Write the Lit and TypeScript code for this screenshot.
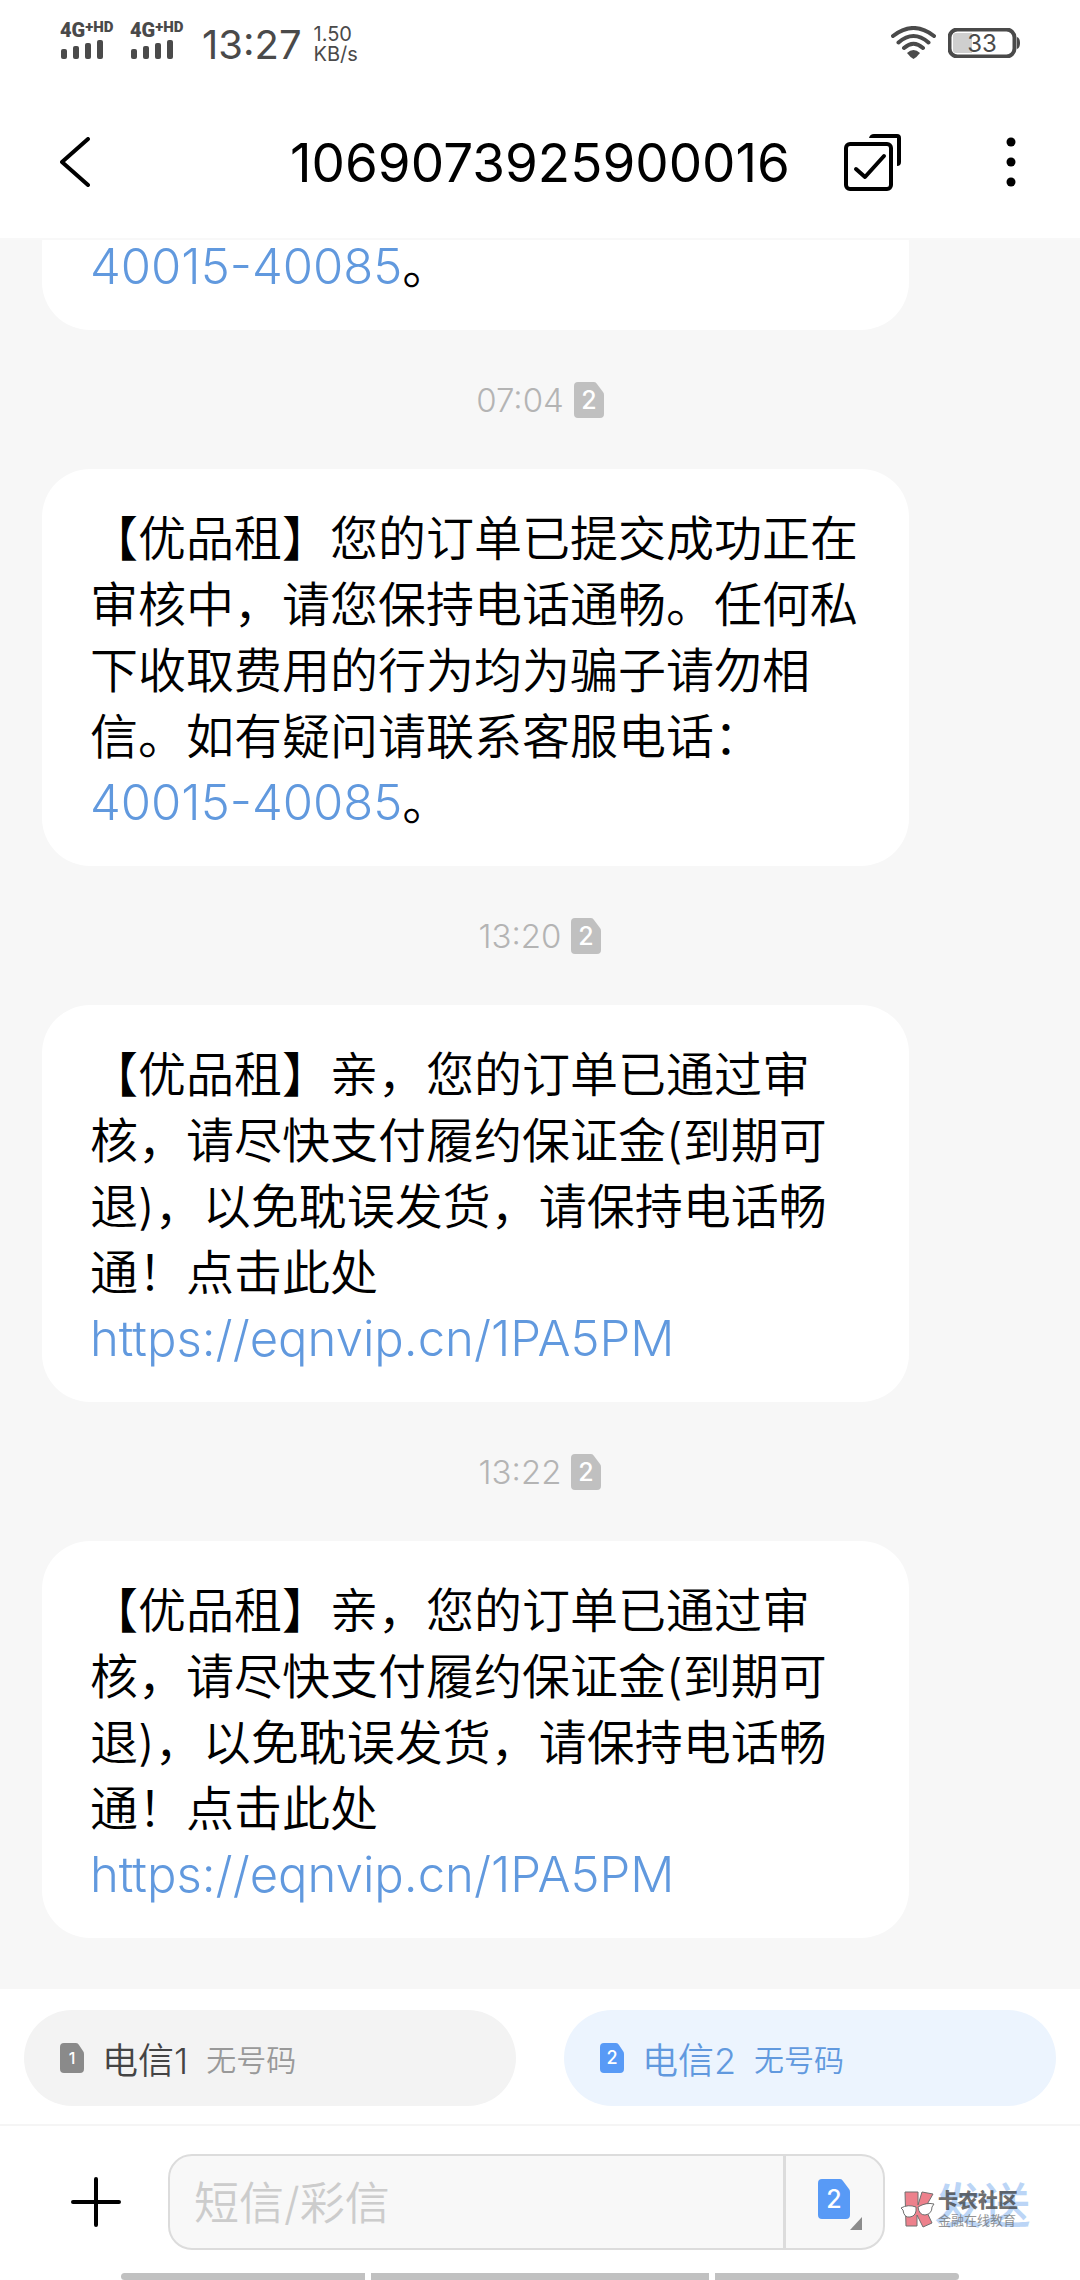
import { LitElement, html, svg, css } from "lit";
import { customElement, property } from "lit/decorators.js";

type Part = { text: string; href?: string };
type Message = { time?: string; parts: Part[] };

const PHONE: Part = { text: "40015-40085", href: "tel:4001540085" };
const PAY_LINK: Part = { text: "https://eqnvip.cn/1PA5PM", href: "https://eqnvip.cn/1PA5PM" };
const APPROVED: Part = {
  text: "【优品租】亲，您的订单已通过审核，请尽快支付履约保证金(到期可退)，以免耽误发货，请保持电话畅通！点击此处",
};

const MESSAGES: Message[] = [
  { parts: [PHONE, { text: "。" }] },
  {
    time: "07:04",
    parts: [
      {
        text: "【优品租】您的订单已提交成功正在审核中，请您保持电话通畅。任何私下收取费用的行为均为骗子请勿相信。如有疑问请联系客服电话：",
      },
      PHONE,
      { text: "。" },
    ],
  },
  { time: "13:20", parts: [APPROVED, PAY_LINK] },
  { time: "13:22", parts: [APPROVED, PAY_LINK] },
];

/** SIM card badge: a rounded card with its top right corner cut off. */
@customElement("sim-badge")
class SimBadge extends LitElement {
  @property({ type: Number }) card = 2;
  @property({ type: Number }) width = 24;
  @property({ type: Number }) height = 30;
  @property({ type: Number }) size = 18;

  static styles = css`
    :host {
      display: block;
      flex: none;
    }
    svg {
      display: block;
    }
    .card {
      fill: currentColor;
    }
    .digit {
      fill: #fff;
      font-family: Inter, "Liberation Sans", sans-serif;
      font-weight: 500;
      text-anchor: middle;
    }
  `;

  render() {
    const w = this.width;
    const h = this.height;
    const r = 4;
    const cut = Math.round(w * 0.25);
    const d = `M${r} 0H${w - cut - 2}Q${w - cut} 0 ${w - cut + 1} 2L${w - 1} ${cut + 2}Q${w} ${cut + 3} ${w} ${cut + 5}V${h - r}Q${w} ${h} ${w - r} ${h}H${r}Q0 ${h} 0 ${h - r}V${r}Q0 0 ${r} 0Z`;
    return html`<svg width=${w} height=${h} viewBox="0 0 ${w} ${h}" aria-hidden="true">
      ${svg`<path class="card" d=${d}></path>
      <text class="digit" x=${w / 2} y=${Math.round(h / 2 + this.size * 0.36)} font-size=${this.size}>${this.card}</text>`}
    </svg>`;
  }
}

@customElement("status-bar")
class StatusBar extends LitElement {
  static styles = css`
    :host {
      display: flex;
      align-items: center;
      justify-content: space-between;
      height: 86px;
      padding: 0 60px;
      color: #4a4a4a;
      font-family: Inter, "Liberation Sans", sans-serif;
    }
    .group {
      display: flex;
      align-items: center;
    }
    .signal {
      display: flex;
      flex-direction: column;
      width: 70px;
      padding-bottom: 8px;
    }
    .network {
      display: flex;
      align-items: flex-start;
      font: 900 20px/20px Roboto, sans-serif;
    }
    .hd {
      font-size: 15px;
      line-height: 14px;
    }
    .bars {
      display: block;
    }
    .time {
      font-size: 40px;
      line-height: 48px;
      padding: 4px 0 0 2px;
    }
    .rate {
      display: flex;
      flex-direction: column;
      font-size: 20px;
      line-height: 20px;
      padding: 2px 0 0 12px;
    }
    .right {
      gap: 12px;
    }
    svg {
      display: block;
      fill: currentColor;
    }
    .line {
      fill: none;
      stroke: currentColor;
      stroke-width: 4;
      stroke-linecap: round;
    }
    .level {
      fill: #cfcfcf;
    }
    .percent {
      font-size: 24px;
      text-anchor: middle;
    }
  `;

  private signal() {
    return html`<div class="signal">
      <div class="network"><span>4G</span><span class="hd">+HD</span></div>
      <svg class="bars" width="44" height="19" viewBox="0 0 44 19" aria-hidden="true">
        <rect x="1" y="9" width="6" height="10" rx="2"></rect>
        <rect x="13" y="6" width="6" height="13" rx="2"></rect>
        <rect x="25" y="3" width="6" height="16" rx="2"></rect>
        <rect x="37" y="0" width="6" height="19" rx="2"></rect>
      </svg>
    </div>`;
  }

  render() {
    return html`
      <div class="group">
        ${this.signal()} ${this.signal()}
        <span class="time">13:27</span>
        <div class="rate"><span>1.50</span><span>KB/s</span></div>
      </div>
      <div class="group right">
        <svg width="45" height="34" viewBox="0 0 45 34" aria-hidden="true">
          <path class="line" d="M2 10Q22.5 -6 43 10M7.500 16.500Q22.500 3.500 37.500 16.500M13 22Q22.500 13.500 32 22"></path>
          <path d="M16 27Q22.500 21 29 27Q26 31 22.500 33Q19 31 16 27Z"></path>
        </svg>
        <svg width="72" height="30" viewBox="0 0 72 30" aria-hidden="true">
          <rect class="line" x="1.500" y="1.500" width="65" height="27" rx="8"></rect>
          <path class="level" d="M8 5H24V25H8Q5 25 5 22V8Q5 5 8 5Z"></path>
          <path d="M69 9Q72 10 72 15T69 21Z"></path>
          <text class="percent" x="34" y="24">33</text>
        </svg>
      </div>
    `;
  }
}

@customElement("app-root")
class AppRoot extends LitElement {
  static styles = css`
    :host {
      display: flex;
      flex-direction: column;
      height: 100vh;
      background: #f7f7f7;
      color: #000;
      font-family: Inter, "Noto Sans CJK SC", sans-serif;
      overflow: hidden;
    }
    button {
      display: flex;
      align-items: center;
      border: 0;
      padding: 0;
      background: none;
      color: inherit;
      font: inherit;
    }
    svg {
      display: block;
      flex: none;
    }
    .stroke {
      fill: none;
      stroke: currentColor;
      stroke-width: 4;
      stroke-linecap: round;
      stroke-linejoin: round;
    }
    .top {
      flex: none;
      background: #fff;
      border-bottom: 2px solid #f8f8f8;
    }
    .nav {
      display: grid;
      grid-template-columns: 1fr auto 1fr;
      align-items: center;
      height: 152px;
      padding: 0 60px;
    }
    .title {
      margin: 0;
      padding-top: 2px;
      font-size: 53px;
      line-height: 64px;
      font-weight: 400;
    }
    .actions {
      display: flex;
      justify-content: space-between;
      padding-left: 54px;
    }
    .list {
      flex: 1;
      min-height: 0;
      overflow: hidden;
      display: flex;
      flex-direction: column;
      justify-content: flex-end;
      padding: 0 42px 51px;
    }
    .stamp {
      flex: none;
      display: flex;
      align-items: center;
      justify-content: center;
      gap: 10px;
      height: 139px;
      color: #b4b4b4;
      font-size: 33px;
      line-height: 40px;
      font-weight: 300;
    }
    .badge {
      color: #c0c0c0;
    }
    .bubble {
      flex: none;
      box-sizing: border-box;
      width: 87%;
      margin: 0;
      padding: 37px 48px 30px;
      border-radius: 48px;
      background: #fff;
      font-size: 48px;
      line-height: 66px;
      font-weight: 350;
      text-spacing-trim: space-all;
    }
    .link {
      color: #6199de;
      font-size: 49px;
      text-decoration: none;
      white-space: nowrap;
    }
    .bottom {
      flex: none;
      background: #fff;
    }
    .sims {
      display: grid;
      grid-template-columns: 1fr 1fr;
      gap: 48px;
      padding: 21px 24px 18px;
      border-bottom: 2px solid #f5f5f5;
    }
    .sim {
      height: 96px;
      padding: 0 36px;
      gap: 18px;
      border-radius: 48px;
      background: #f3f3f3;
      color: #8a8a8a;
      font-weight: 350;
    }
    .carrier {
      color: #444;
      font-size: 36px;
    }
    .number {
      font-size: 30px;
      color: #999;
    }
    .active {
      background: #ecf4fe;
      color: #589af6;
    }
    .active .carrier,
    .active .number {
      color: #6199de;
    }
    .compose {
      position: relative;
      display: flex;
      align-items: center;
      padding: 28px 0 23px;
    }
    .add {
      width: 168px;
      padding-left: 71px;
      box-sizing: border-box;
    }
    .field {
      flex: 1;
      min-width: 0;
      display: flex;
      box-sizing: border-box;
      height: 96px;
      border: 2px solid #dcdcdc;
      border-radius: 24px;
      background: #f8f8f8;
    }
    .input {
      flex: 1;
      min-width: 0;
      border: 0;
      padding: 4px 24px 0;
      background: none;
      font: 350 45px/60px Inter, "Noto Sans CJK SC", sans-serif;
      outline: none;
    }
    .input::placeholder {
      color: #ccc;
      opacity: 1;
    }
    .pick {
      width: 100px;
      padding-left: 32px;
      border-left: 3px solid #dcdcdc;
      color: #589af6;
    }
    .card {
      padding-bottom: 6px;
    }
    .corner {
      align-self: flex-end;
      margin-bottom: 18px;
      fill: #8c8c8c;
    }
    .send {
      width: 195px;
      justify-content: center;
      color: #bbd5f6;
      font-size: 48px;
      font-weight: 500;
    }
    .mark {
      position: absolute;
      right: 62px;
      top: 64px;
      display: flex;
      align-items: center;
      gap: 3px;
      opacity: 0.7;
      pointer-events: none;
    }
    .brand {
      display: flex;
      flex-direction: column;
      color: #333;
      font-size: 20px;
      line-height: 22px;
      font-weight: 900;
    }
    .slogan {
      color: #666;
      font-size: 13px;
      line-height: 16px;
      font-weight: 400;
    }
    .red {
      fill: #e64c5c;
      stroke: #333;
    }
    .lens {
      fill: #fff;
      stroke: #333;
    }
    .home {
      display: grid;
      grid-template-columns: 1fr 338px 1fr;
      gap: 6px;
      padding: 0 121px;
    }
    .seg {
      height: 7px;
      background: #c1c1c1;
    }
    .seg:first-child {
      border-radius: 4px 0 0 4px;
    }
    .seg:last-child {
      border-radius: 0 4px 4px 0;
    }
  `;

  private message(m: Message) {
    return html`
      ${m.time
        ? html`<div class="stamp">
            <time>${m.time}</time>
            <sim-badge class="badge" width="30" height="36" size="25"></sim-badge>
          </div>`
        : ""}
      <p class="bubble">${m.parts.map((p) => (p.href ? html`<a class="link" href=${p.href}>${p.text}</a>` : p.text))}</p>
    `;
  }

  render() {
    return html`
      <header class="top">
        <status-bar></status-bar>
        <nav class="nav">
          <button aria-label="返回">
            <svg width="30" height="50" viewBox="0 0 30 50"><path class="stroke" d="M28 2L2 25L28 48"></path></svg>
          </button>
          <h1 class="title">1069073925900016</h1>
          <div class="actions">
            <button aria-label="选择">
              <svg width="58" height="58" viewBox="0 0 58 58">
                <rect class="stroke" x="2" y="11" width="45" height="45" rx="4"></rect>
                <path class="stroke" d="M12 36L21 44L40 23"></path>
                <path d="M25 5Q26 1 30 1H53Q57 1 57 5V29Q57 33 53 33V5Z"></path>
              </svg>
            </button>
            <button aria-label="更多">
              <svg width="18" height="50" viewBox="0 0 18 50">
                <circle cx="9" cy="5" r="4.500"></circle>
                <circle cx="9" cy="25" r="4.500"></circle>
                <circle cx="9" cy="45" r="4.500"></circle>
              </svg>
            </button>
          </div>
        </nav>
      </header>
      <main class="list">${MESSAGES.map((m) => this.message(m))}</main>
      <footer class="bottom">
        <div class="sims">
          <button class="sim" aria-pressed="false">
            <sim-badge card="1" size="16"></sim-badge>
            <span class="carrier">电信1</span><span class="number">无号码</span>
          </button>
          <button class="sim active" aria-pressed="true">
            <sim-badge size="18"></sim-badge>
            <span class="carrier">电信2</span><span class="number">无号码</span>
          </button>
        </div>
        <div class="compose">
          <button class="add" aria-label="添加">
            <svg width="50" height="50" viewBox="0 0 50 50"><path class="stroke" d="M25 2V48M2 25H48"></path></svg>
          </button>
          <div class="field">
            <input class="input" type="text" aria-label="短信/彩信" placeholder="短信/彩信" />
            <button class="pick" aria-label="选择卡">
              <sim-badge class="card" width="32" height="40" size="25"></sim-badge>
              <svg class="corner" width="12" height="13" viewBox="0 0 12 13"><path d="M12 0V13H0Z"></path></svg>
            </button>
          </div>
          <button class="send">发送</button>
          <div class="mark">
            <svg width="35" height="37" viewBox="0 0 35 37" aria-hidden="true">
              <path class="red" d="M5 1H18V14L22 1L33 3L25 17L32 32L23 36L17 24V35H6Z"></path>
              <path class="lens" d="M1 17Q8 13 16 16Q17 25 10 26Q4 27 3 19ZM18 16Q26 11 34 13L32 16Q32 23 25 24Q19 24 18 16Z"></path>
            </svg>
            <div class="brand"><span>卡农社区</span><span class="slogan">金融在线教育</span></div>
          </div>
        </div>
        <div class="home"><div class="seg"></div><div class="seg"></div><div class="seg"></div></div>
      </footer>
    `;
  }
}
